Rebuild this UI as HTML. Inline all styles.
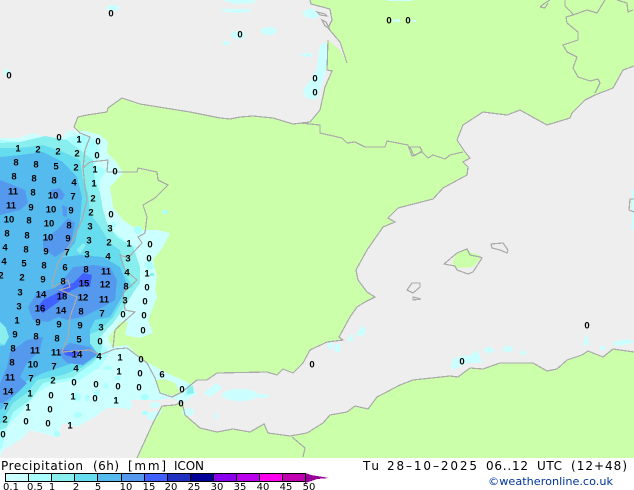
<!DOCTYPE html>
<html><head><meta charset="utf-8"><style>
html,body{margin:0;padding:0;background:#fff;width:634px;height:490px;overflow:hidden}
svg{display:block}
.lb text{font:bold 9.5px "Liberation Sans",sans-serif;text-anchor:middle;fill:#000}
.bl text{font:10px "DejaVu Sans",sans-serif;fill:#000;text-anchor:middle}
.t text{font:12px "DejaVu Sans",sans-serif;fill:#000}
</style></head><body>
<svg width="634" height="490" viewBox="0 0 634 490" xmlns="http://www.w3.org/2000/svg">
<rect width="634" height="458" fill="#eeeeee"/>
<g fill="#ccffaa" shape-rendering="crispEdges">
<polygon id="l" points="310,0 311,4 330,9 332,20 328,28 340,42 347,63 340,50 328,40 327,70 332,71 325,87 320,110 310,122 293,124 273,118 253,116 240,117 230,119 220,118 190,112 165,108 140,104 122,98 108,108 107,112 87,115 78,117 74,127 80,135 90,137 85,150 83,168 85,187 87,200 82,220 73,240 58,263 52,283 60,290 77,297 70,317 68,337 62,352 90,350 100,355 115,349 127,348 147,363 155,378 160,393 172,397 182,392 197,380 207,380 217,373 267,372 277,375 283,369 293,373 303,363 310,350 327,342 343,340 339,337 350,317 357,307 365,302 375,297 367,292 358,280 356,270 367,250 383,227 395,222 388,218 398,208 433,199 443,188 467,175 468,167 463,162 470,158 465,152 457,140 463,125 483,112 507,115 520,110 547,125 570,118 572,113 585,100 595,95 613,88 623,70 634,66 634,0"/>
<polygon points="137,458 153,423 162,406 175,405 182,402 185,415 200,428 217,432 233,429 250,432 264,424 268,433 290,436 307,433 323,423 330,415 347,412 355,406 368,409 377,397 400,385 413,380 450,376 458,377 470,368 483,369 500,363 533,363 547,371 557,369 567,360 582,355 588,351 603,357 613,349 634,352 634,458"/>
<polygon points="452,263 457,253 467,249 470,252 480,255 481,258 473,267 457,268"/>
<polygon points="631,203 634,201 634,209 632,209"/>
</g>
<!-- rain -->
<g shape-rendering="crispEdges">
<g fill="#ccffff">
<polygon points="0,138 20,138 33,133 43,137 63,137 68,130 80,132 83,130 100,135 108,142 107,153 117,163 123,173 110,187 113,207 123,220 138,230 157,230 170,233 163,247 153,260 157,277 155,290 157,297 148,320 153,333 140,338 125,335 128,322 120,322 108,338 112,347 127,345 143,360 167,373 187,382 197,393 183,403 172,398 160,400 130,400 127,408 107,408 93,418 77,427 63,423 57,437 30,430 20,440 3,450 0,458"/>
<ellipse cx="113" cy="8" rx="7" ry="3"/><ellipse cx="7" cy="72" rx="3" ry="3"/>
<polygon points="220,0 255,0 254,3 235,4 225,1"/><polygon points="221,9 250,9 251,12 235,13 222,11"/>
<polygon points="302,12 312,8 320,14 316,19 305,17"/><ellipse cx="269" cy="31" rx="8" ry="4"/><ellipse cx="238" cy="35" rx="7" ry="4"/><ellipse cx="226" cy="43" rx="4" ry="2"/><ellipse cx="307" cy="55" rx="6" ry="2"/>
<polygon points="320,45 326,42 328,52 326,70 322,85 316,100 306,98 303,90 312,78 317,68"/>
<rect x="387" y="0" width="26" height="1"/><polygon points="392,20 400,19 400,22 393,22"/><rect x="411" y="20" width="5" height="2"/>
<polygon points="356,334 362,326 366,328 365,334 358,337"/><polygon points="347,340 352,333 354,340 350,342"/><rect x="328" y="343" width="5" height="6"/><rect x="335" y="344" width="5" height="8"/>
<polygon points="450,368 454,358 470,355 478,350 482,363 467,363 455,369"/><ellipse cx="489" cy="350" rx="5" ry="3"/><ellipse cx="508" cy="349" rx="5" ry="3"/><ellipse cx="523" cy="353" rx="3" ry="2"/>
<polygon points="583,345 586,333 590,345"/><rect x="600" y="346" width="5" height="4"/><polygon points="613,342 627,339 634,341 630,344 615,346"/>
<polygon points="203,393 217,383 222,388 210,397"/><ellipse cx="240" cy="395" rx="18" ry="6"/><ellipse cx="262" cy="396" rx="7" ry="2"/><rect x="215" y="413" width="3" height="6"/>
<polygon points="147,413 163,410 155,420 148,420"/><ellipse cx="188" cy="412" rx="6" ry="4"/><ellipse cx="155" cy="405" rx="5" ry="3"/><ellipse cx="128" cy="405" rx="4" ry="5"/>
<rect x="632" y="190" width="2" height="40"/>
</g>
<g fill="#aaffff">
<polygon points="0,140 30,143 60,142 75,135 85,135 95,140 100,150 95,165 107,170 100,180 100,195 103,215 110,230 125,240 137,248 135,265 133,290 123,313 107,323 100,343 110,352 100,367 80,380 53,383 37,393 20,413 7,427 2,447 0,450"/>
<polygon points="145,265 150,258 154,268 148,270"/><ellipse cx="108" cy="368" rx="4" ry="2"/><ellipse cx="118" cy="378" rx="3" ry="2"/><ellipse cx="106" cy="386" rx="2" ry="3"/><ellipse cx="145" cy="397" rx="4" ry="3"/><ellipse cx="97" cy="393" rx="3" ry="3"/><ellipse cx="77" cy="397" rx="4" ry="4"/><ellipse cx="87" cy="398" rx="2" ry="3"/><ellipse cx="78" cy="415" rx="4" ry="3"/><ellipse cx="57" cy="434" rx="3" ry="3"/><ellipse cx="113" cy="225" rx="3" ry="3"/><ellipse cx="138" cy="230" rx="4" ry="4"/><ellipse cx="165" cy="212" rx="3" ry="2"/>
<polygon points="187,385 192,383 194,394 184,396"/><ellipse cx="145" cy="413" rx="3" ry="2"/>
</g>
<g fill="#88eeee">
<polygon points="0,143 20,142 45,136 67,140 80,150 93,160 95,180 100,193 103,210 107,223 117,237 133,247 140,267 140,283 133,293 127,303 113,323 100,337 103,343 100,355 93,363 73,377 43,383 30,400 13,412 7,427 0,430"/>
<polygon points="188,387 193,386 194,393 187,394"/><rect x="150" y="273" width="4" height="3"/>
</g>
<g fill="#66ddee">
<polygon points="0,148 20,148 43,145 63,152 80,160 83,180 88,193 90,213 100,227 110,243 120,250 127,277 133,287 123,290 123,300 113,317 100,330 93,333 83,337 90,345 100,355 83,367 63,375 37,380 27,393 13,403 3,420 0,425"/>
</g>
<g fill="#88eeee"><polygon points="0,322 6,328 9,337 4,345 0,343"/><polygon points="76,250 83,243 86,245 80,254"/></g>
<g fill="#55bbee">
<polygon points="0,157 20,155 43,152 63,162 77,177 82,197 80,220 75,243 63,257 80,255 103,257 120,267 128,287 120,300 110,317 95,320 90,330 90,343 97,353 73,363 43,373 23,383 20,390 3,408 0,410 0,346 5,345 9,337 6,328 0,322"/>
</g>
<g fill="#5599ee">
<polygon points="0,180 13,185 25,190 28,203 20,210 0,215"/>
<polygon points="50,190 60,188 65,195 62,200 53,199"/><polygon points="62,205 67,207 67,217 63,216"/>
<polygon points="43,240 57,230 68,218 75,223 70,247 55,257 43,248"/>
<polygon points="63,280 73,267 93,265 110,267 117,280 115,300 103,307 83,317 67,320 58,317 48,322 33,320 28,307 37,293 55,288"/>
<polygon points="57,352 67,363 83,365 97,355 90,347 70,343"/>
<polygon points="43,337 40,350 27,363 20,377 27,383 17,393 3,403 0,403 0,383 7,367 10,352 27,340"/>
</g>
<g fill="#4060ff">
<polygon points="73,283 83,273 92,275 90,287 82,285 67,293 57,303 43,313 37,308 43,300 57,293 65,286"/>
<polygon points="63,350 80,352 73,357 65,355"/>
</g>
<polygon fill="#ccffaa" points="155,380 165,379 175,383 180,392 172,396 160,392"/>
</g>
<!-- lines -->
<g fill="none" stroke="#aaaaaa" stroke-width="1.2" shape-rendering="crispEdges">
<polyline points="310,0 311,4 330,9 332,20 328,28 340,42 347,63"/>
<polyline points="328,40 327,70 332,71 325,87 320,110 310,122 293,124 273,118 253,116 240,117 230,119 220,118 190,112 165,108 140,104 122,98 108,108 107,112 87,115 78,117 74,127 80,133 90,137 85,150 83,168 85,187 87,200 82,220 73,240 58,263 52,283 53,287 68,280 70,287 60,290 77,297 70,317 68,337 62,352 90,350 100,355 115,349 127,348 147,363 155,378 160,393 172,397 182,392 197,380 207,380 217,373 267,372 277,375 283,369 293,373 303,363 310,350 327,342 343,340 339,337 350,317 357,307 365,302 375,297 367,292 358,280 356,270 367,250 383,227 395,222 388,218 398,208 433,199 443,188 467,175 468,167 463,162 470,158 465,152 457,140 463,125 483,112 507,115 520,110 547,125 570,118 572,113 585,100 595,95 613,88 623,70 634,66"/>
<polyline points="300,123 320,125 320,133 342,138 347,143 355,142 365,147 385,147 387,141 408,145 412,156 422,152 428,158 433,155 445,159 450,155 463,152"/>
<polygon points="410,147 420,147 422,151 414,156"/>
<polyline points="83,168 90,162 108,160 107,172 123,172 137,172 138,168 157,172 158,180 168,185 155,198 143,205 147,217 145,233 138,237 142,243 128,258 120,255 125,270 137,280 123,293 125,310 135,312 128,318 115,330 113,348"/>
<polyline points="137,458 153,423 162,406 175,405 182,402 185,415 200,428 217,432 233,429 250,432 264,424 268,433 290,436 307,433 323,423 330,415 347,412 355,406 368,409 377,397 400,385 413,380 450,376 458,377 470,368 483,369 500,363 533,363 547,371 557,369 567,360 582,355 588,351 603,357 613,349 634,352"/>
<polyline points="292,437 305,448 303,457"/>
<polygon points="444,264 457,253 467,249 470,255 480,257 482,258 473,272 468,274 457,270 455,266"/>
<polygon points="491,244 503,243 508,250 507,253 500,250 492,248"/>
<polygon points="407,290 412,283 420,283 420,287 413,293"/><polygon points="413,297 421,299 413,300"/>
<polyline points="634,199 630,199 629,210 634,212"/>
<polyline points="565,0 565,6 572,13 573,15 587,10 597,13 605,0"/>
<polyline points="573,15 566,17 567,23 578,32 578,40 563,45 567,52 577,57 573,68 578,77 590,81 598,79 600,83 595,93"/>
<polyline points="617,0 627,3 628,12 633,10"/><polyline points="540,7 545,3 550,0"/><polyline points="540,7 545,8 548,3"/>
<polygon points="317,12 325,14 327,16 320,15"/><polygon points="322,20 326,22 329,28 325,26"/>
</g>
<!-- labels -->
<g class="lb" transform="translate(0,0.5)">
<text x="59" y="140">0</text><text x="79" y="142">1</text><text x="98" y="144">0</text>
<text x="18" y="151">1</text><text x="38" y="152">2</text><text x="58" y="154">2</text><text x="77" y="156">2</text><text x="97" y="158">0</text>
<text x="16" y="165">8</text><text x="36" y="167">8</text><text x="56" y="169">5</text><text x="76" y="170">2</text><text x="95" y="172">1</text><text x="115" y="174">0</text>
<text x="14" y="179">8</text><text x="34" y="181">8</text><text x="54" y="183">8</text><text x="74" y="185">4</text><text x="94" y="186">1</text>
<text x="13" y="194">11</text><text x="33" y="195">8</text><text x="53" y="198">10</text><text x="73" y="199">7</text><text x="93" y="201">2</text>
<text x="11" y="208">11</text><text x="31" y="210">9</text><text x="51" y="212">10</text><text x="71" y="213">9</text><text x="91" y="215">2</text><text x="111" y="217">0</text>
<text x="9" y="222">10</text><text x="29" y="223">8</text><text x="49" y="226">10</text><text x="69" y="228">8</text><text x="90" y="229">3</text><text x="110" y="231">3</text>
<text x="7" y="236">8</text><text x="27" y="238">8</text><text x="48" y="240">10</text><text x="68" y="241">9</text><text x="89" y="243">3</text><text x="109" y="245">2</text><text x="129" y="246">1</text><text x="150" y="247">0</text>
<text x="5" y="250">4</text><text x="26" y="252">8</text><text x="46" y="254">9</text><text x="67" y="255">7</text><text x="87" y="257">3</text><text x="108" y="259">4</text><text x="128" y="261">3</text><text x="149" y="261">0</text>
<text x="4" y="264">4</text><text x="24" y="266">5</text><text x="44" y="268">8</text><text x="65" y="270">6</text><text x="86" y="272">8</text><text x="106" y="274">11</text><text x="127" y="275">4</text><text x="147" y="276">1</text>
<text x="1" y="278">2</text><text x="22" y="280">2</text><text x="43" y="282">9</text><text x="63" y="284">8</text><text x="84" y="286">15</text><text x="105" y="287">12</text><text x="126" y="289">8</text><text x="147" y="290">0</text>
<text x="20" y="295">3</text><text x="41" y="297">14</text><text x="62" y="299">18</text><text x="83" y="300">12</text><text x="104" y="302">11</text><text x="125" y="303">3</text><text x="145" y="304">0</text>
<text x="19" y="309">3</text><text x="40" y="311">16</text><text x="61" y="313">14</text><text x="81" y="314">8</text><text x="102" y="316">7</text><text x="123" y="317">0</text><text x="144" y="318">0</text>
<text x="17" y="323">1</text><text x="38" y="325">9</text><text x="59" y="327">9</text><text x="80" y="328">9</text><text x="101" y="330">3</text><text x="143" y="333">0</text>
<text x="15" y="337">9</text><text x="36" y="339">8</text><text x="57" y="341">8</text><text x="79" y="342">5</text><text x="100" y="344">0</text>
<text x="13" y="351">8</text><text x="35" y="353">11</text><text x="56" y="355">11</text><text x="77" y="357">14</text><text x="99" y="359">4</text><text x="120" y="360">1</text><text x="141" y="362">0</text>
<text x="12" y="365">8</text><text x="33" y="367">10</text><text x="54" y="369">7</text><text x="76" y="371">4</text><text x="119" y="374">1</text><text x="140" y="376">0</text><text x="162" y="377">6</text>
<text x="10" y="380">11</text><text x="31" y="381">7</text><text x="53" y="383">2</text><text x="74" y="385">0</text><text x="96" y="387">0</text><text x="118" y="389">0</text><text x="139" y="390">0</text><text x="182" y="392">0</text>
<text x="8" y="394">14</text><text x="30" y="396">1</text><text x="51" y="398">0</text><text x="73" y="399">1</text><text x="95" y="401">0</text><text x="116" y="403">1</text><text x="181" y="406">0</text>
<text x="6" y="409">7</text><text x="28" y="410">1</text><text x="50" y="412">0</text>
<text x="5" y="422">2</text><text x="26" y="424">0</text><text x="48" y="426">0</text><text x="70" y="428">1</text>
<text x="3" y="437">0</text>
<text x="111" y="16">0</text><text x="9" y="78">0</text><text x="240" y="37">0</text><text x="389" y="23">0</text><text x="408" y="23">0</text><text x="315" y="81">0</text><text x="315" y="95">0</text><text x="312" y="367">0</text><text x="462" y="364">0</text><text x="587" y="328">0</text>
</g>
<!-- footer -->
<rect y="458" width="634" height="32" fill="#fff"/>
<g class="t">
<text x="1" y="470" textLength="82" lengthAdjust="spacing">Precipitation</text>
<text x="93" y="470" textLength="26" lengthAdjust="spacing">(6h)</text>
<text x="128" y="470" textLength="38" lengthAdjust="spacing">[mm]</text>
<text x="174" y="470" textLength="30" lengthAdjust="spacing">ICON</text>
<text x="363" y="470" textLength="16" lengthAdjust="spacing">Tu</text>
<text x="387" y="470" textLength="90" lengthAdjust="spacing">28–10–2025</text>
<text x="486" y="470" textLength="42" lengthAdjust="spacing">06..12</text>
<text x="537" y="470" textLength="25" lengthAdjust="spacing">UTC</text>
<text x="571" y="470" textLength="56" lengthAdjust="spacing">(12+48)</text>
</g>
<text x="488" y="485" font-family="DejaVu Sans,sans-serif" font-size="11" textLength="125" lengthAdjust="spacingAndGlyphs" fill="#003399">©weatheronline.co.uk</text>
<g shape-rendering="crispEdges">
<rect x="6" y="474" width="23" height="7" fill="#ccffff"/><rect x="29" y="474" width="23" height="7" fill="#aaffff"/><rect x="52" y="474" width="23" height="7" fill="#88eeee"/><rect x="75" y="474" width="23" height="7" fill="#66ddee"/><rect x="98" y="474" width="23" height="7" fill="#55bbee"/><rect x="121" y="474" width="23" height="7" fill="#5599ee"/><rect x="144" y="474" width="23" height="7" fill="#4060ff"/><rect x="167" y="474" width="23" height="7" fill="#2030c0"/><rect x="190" y="474" width="23" height="7" fill="#000099"/><rect x="213" y="474" width="23" height="7" fill="#8800ee"/><rect x="236" y="474" width="23" height="7" fill="#bb00ee"/><rect x="259" y="474" width="23" height="7" fill="#ff00ee"/><rect x="282" y="474" width="23" height="7" fill="#c000b0"/>
<polygon points="305,473 311,475 317,476 329,478 317,479 311,481 305,483" fill="#990099"/>
<g fill="none" stroke="#000"><rect x="5.5" y="473.5" width="300" height="8"/><path d="M28.5 474V481M51.5 474V481M74.5 474V481M97.5 474V481M121.5 474V481M144.5 474V481M167.5 474V481M190.5 474V481M213.5 474V481M236.5 474V481M259.5 474V481M282.5 474V481"/></g>
</g>
<g class="bl">
<text x="11" y="490">0.1</text><text x="35" y="490">0.5</text><text x="52" y="490">1</text><text x="76" y="490">2</text><text x="98" y="490">5</text><text x="126" y="490">10</text><text x="149" y="490">15</text><text x="171" y="490">20</text><text x="194" y="490">25</text><text x="217" y="490">30</text><text x="240" y="490">35</text><text x="263" y="490">40</text><text x="286" y="490">45</text><text x="309" y="490">50</text>
</g>
</svg>
</body></html>
